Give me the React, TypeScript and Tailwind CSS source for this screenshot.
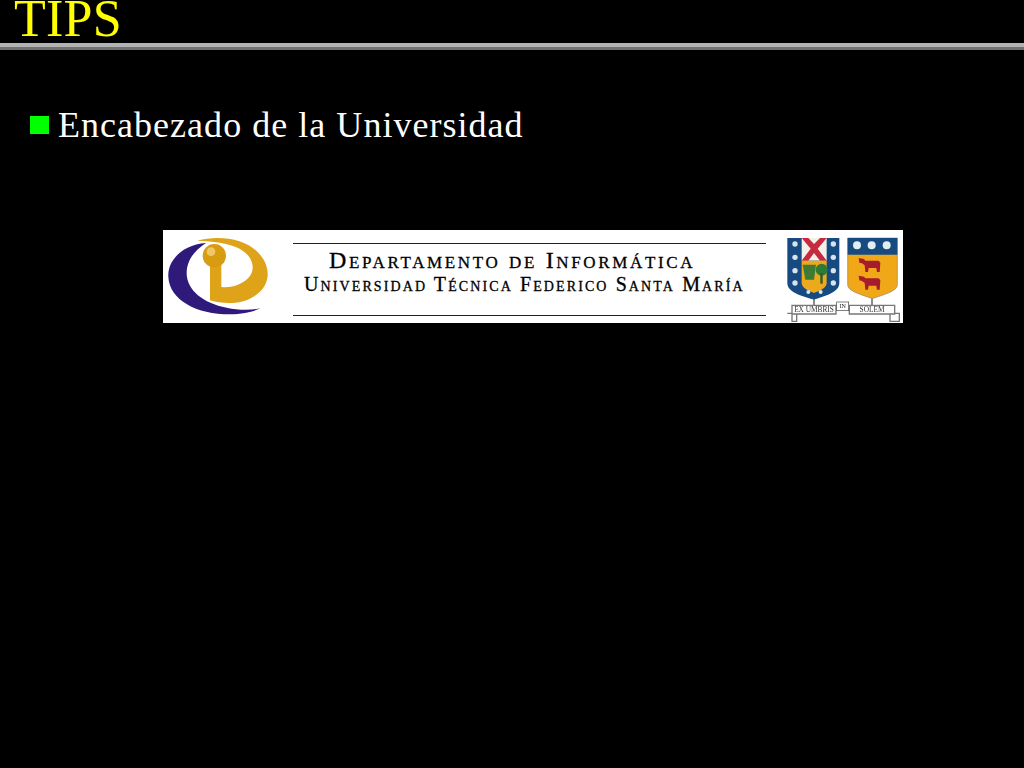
const Logo = () => (
  <svg width="130" height="93" viewBox="9 15 390 279" className="shrink-0 blur-[0.5px]">
    <path d="M138 54 C70 58 22 105 25 155 C28 225 110 268 210 268 C245 268 280 260 302 250 C270 256 235 256 200 248 C130 236 80 195 80 145 C80 105 105 75 138 54 Z" fill="#2f1a7c" />
    <path d="M112 47 C170 30 250 38 292 80 C337 125 332 182 285 212 C245 240 190 238 150 226 L150 112 L184 112 L184 186 C215 190 255 176 272 150 C290 115 265 80 225 65 C190 52 150 48 112 47 Z" fill="#dfa31a" />
    <circle cx="163" cy="92" r="35" fill="#d89c12" />
    <circle cx="153" cy="80" r="13" fill="#efc766" />
  </svg>
)

const Cow = ({ y }: { y: number }) => (
  <path
    d={`M236 ${y} L252 ${y + 3} L256 ${y + 8} L296 ${y + 8} L301 ${y + 14} L299 ${y + 42} L291 ${y + 42} L289 ${y + 30} L266 ${y + 30} L264 ${y + 42} L256 ${y + 42} L254 ${y + 22} L246 ${y + 16} L238 ${y + 14} Z`}
    fill="#a51c2c"
  />
)

const dots = [48, 88, 128, 165]

const Crest = () => (
  <svg width="120" height="93" viewBox="9 6 360 279" className="shrink-0 blur-[0.5px]">
    <path d="M22 30 H178 V165 C178 195 130 205 102 215 C70 205 22 195 22 165 Z" fill="#164a80" />
    <path d="M65 30 H140 V98 H65 Z" fill="#f3f0ea" />
    <path d="M65 30 L85 30 L102 48 L120 30 L140 30 L113 62 L140 98 L120 98 L102 75 L85 98 L65 98 L92 62 Z" fill="#c62a3e" />
    <path d="M65 98 H140 V165 C140 180 120 188 102 195 C85 188 65 180 65 165 Z" fill="#eba91c" />
    <path d="M68 110 H108 L102 155 H76 Z" fill="#3f7a35" />
    <circle cx="125" cy="125" r="18" fill="#2f7a35" />
    <rect x="121" y="135" width="7" height="32" fill="#2f5a2a" />
    {dots.map((y) => (
      <g key={y}>
        <circle cx="45" cy={y} r="8" fill="#d8e4ec" />
        <circle cx="160" cy={y} r="8" fill="#d8e4ec" />
      </g>
    ))}
    <circle cx="85" cy="192" r="6" fill="#d8e4ec" />
    <circle cx="122" cy="192" r="6" fill="#d8e4ec" />
    <rect x="100" y="212" width="4" height="20" fill="#555" />

    <path d="M203 30 H352 V170 C352 190 310 200 277 212 C245 200 203 190 203 170 Z" fill="#f0a818" stroke="#8a8a70" strokeWidth="2" />
    <path d="M203 30 H352 V80 H203 Z" fill="#164a80" />
    <circle cx="231" cy="52" r="12" fill="#e4edf2" />
    <circle cx="275" cy="52" r="12" fill="#e4edf2" />
    <circle cx="320" cy="52" r="12" fill="#e4edf2" />
    <Cow y={90} />
    <Cow y={143} />
    <rect x="274" y="212" width="4" height="20" fill="#555" />

    <path d="M36 232 H168 V258 H36 Z M22 256 H36 V280 H50 V258" fill="none" stroke="#777" strokeWidth="4" />
    <path d="M208 232 H344 V258 H208 Z M330 258 V280 H358 V256 H344" fill="none" stroke="#777" strokeWidth="4" />
    <rect x="170" y="222" width="36" height="26" fill="#fff" stroke="#444" strokeWidth="2" />
    <text x="188" y="241" textAnchor="middle" fontSize="18" fill="#222">IN</text>
    <text x="102" y="252" textAnchor="middle" fontSize="22" fill="#333">EX UMBRIS</text>
    <text x="276" y="252" textAnchor="middle" fontSize="22" fill="#333">SOLEM</text>
  </svg>
)

export default function App() {
  return (
    <div className="min-h-[768px] bg-black font-['Liberation_Serif',serif]">
      <header className="h-[50px] flex flex-col justify-end">
        <h1 className="pl-[14px] text-[52px] leading-[37px] h-[43px] tracking-[0.25px] text-[#ffff00]">TIPS</h1>
        <div className="h-1 bg-[#b2b2b2] shrink-0" />
        <div className="h-[3px] bg-[#707070] shrink-0" />
      </header>

      <div className="flex items-center gap-[9px] pl-[30px] mt-[54px]">
        <span className="w-[19px] h-[18px] bg-[#00ff00]" />
        <p className="text-[36px] leading-[42px] text-white tracking-[1.03px]">Encabezado de la Universidad</p>
      </div>

      <div className="flex w-[740px] h-[93px] ml-[163px] mt-[84px] bg-white">
        <Logo />
        <div className="w-[473px] mt-[13px] h-[73px] border-y border-[#222] text-black [font-variant:small-caps] [-webkit-text-stroke:0.3px_black]">
          <p className="pl-[36px] text-[24px] leading-[24px] mt-[4px] tracking-[2.65px] whitespace-nowrap">Departamento de Informática</p>
          <p className="pl-[11px] text-[20px] leading-[24px] tracking-[2.1px] whitespace-nowrap">Universidad Técnica Federico Santa María</p>
        </div>
        <div className="ml-[17px]">
          <Crest />
        </div>
      </div>
    </div>
  )
}
